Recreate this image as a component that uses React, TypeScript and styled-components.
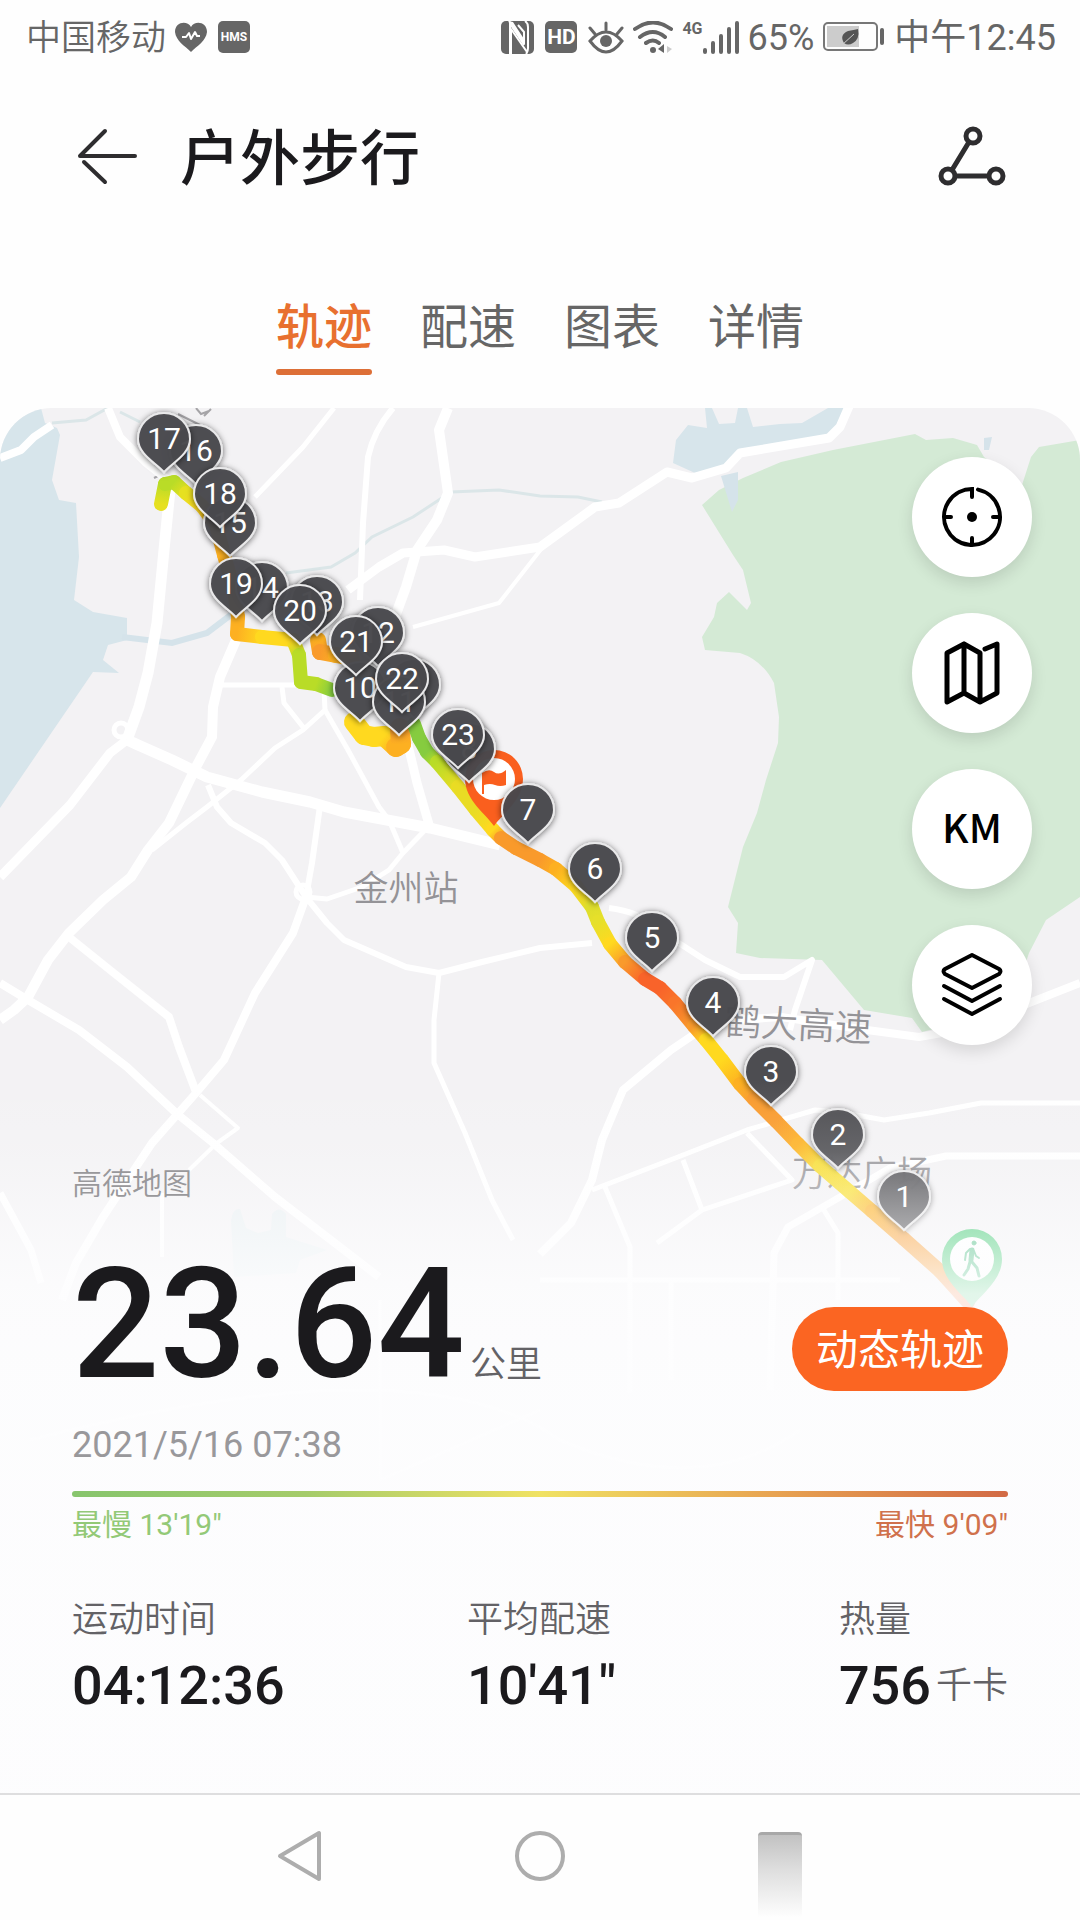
import React from "react";
import styled, { createGlobalStyle, css } from "styled-components";

const FONT = `Roboto, "Noto Sans CJK SC", sans-serif`;

const GlobalStyle = createGlobalStyle`
  *, *::before, *::after { box-sizing: border-box; }
  body { margin: 0; background: #fefefe; font-family: ${FONT}; color: #1b1a1d; }
  button { border: 0; padding: 0; background: none; font: inherit; color: inherit; cursor: pointer; }
  svg { display: block; flex: none; }
`;

const Page = styled.div`
  display: flex;
  flex-direction: column;
  min-height: 100vh;
`;

/* ---------- status bar ---------- */

const StatusBar = styled.div`
  display: flex;
  align-items: center;
  justify-content: space-between;
  height: 74px;
  padding: 0 24px 0 26px;
  color: #666;
  font-size: 36px;
  line-height: 48px;
  white-space: nowrap;
`;

const StatusGroup = styled.div`
  display: flex;
  align-items: center;
  gap: 9px;
`;

const Carrier = styled.span`
  padding-top: 4px;
  font-size: 35px;
  font-weight: 350;
`;

const Reading = styled.span`
  padding-top: 2px;
`;

const Badge = styled.span<{ $size: number }>`
  display: flex;
  align-items: center;
  justify-content: center;
  width: 32px;
  height: 32px;
  margin: 0 2px;
  border-radius: 5px;
  background: #666;
  color: #fff;
  font-size: ${(p) => p.$size}px;
  font-weight: 700;
  line-height: 20px;
`;

const Signal = styled.div`
  display: flex;
  align-items: flex-start;
`;

const Network = styled.span`
  font-size: 16px;
  font-weight: 700;
  line-height: 16px;
`;

/* ---------- header and tabs ---------- */

const Header = styled.header`
  display: flex;
  align-items: center;
  height: 166px;
  padding: 0 72px 0 76px;
`;

const Title = styled.h1`
  flex: 1;
  margin: 0 0 0 40px;
  padding-top: 6px;
  font-size: 60px;
  font-weight: 500;
  line-height: 80px;
`;

const Tabs = styled.nav`
  display: flex;
  justify-content: center;
  gap: 48px;
  padding: 60px 0 33px;
`;

const Tab = styled.button<{ $active?: boolean }>`
  position: relative;
  padding-bottom: 19px;
  color: #666;
  font-size: 48px;
  line-height: 56px;
  ${(p) =>
    p.$active &&
    css`
      color: #e8702f;
      font-weight: 500;
      &::after {
        content: "";
        position: absolute;
        left: 0;
        right: 0;
        bottom: 0;
        height: 6px;
        border-radius: 3px;
        background: #dd6f37;
      }
    `}
`;

/* ---------- map card ---------- */

const MapCard = styled.main`
  position: relative;
  display: flex;
  flex: 1;
  flex-direction: column;
  overflow: hidden;
  border-radius: 52px 52px 0 0;
  background: #fdfdfe;
`;

const MapArt = styled.svg`
  position: absolute;
  inset: 0;
  width: 100%;
  height: 100%;
`;

const PlaceName = styled.text<{ $size: number }>`
  font-family: ${FONT};
  font-size: ${(p) => p.$size}px;
  font-weight: 350;
  text-anchor: middle;
  fill: #949397;
`;

const PinNumber = styled.text`
  font-family: ${FONT};
  font-size: 30px;
  text-anchor: middle;
  fill: #fff;
`;

const Tools = styled.div`
  position: relative;
  display: flex;
  flex-direction: column;
  align-self: flex-end;
  gap: 36px;
  padding: 49px 48px 0 0;
`;

const ToolButton = styled.button`
  display: flex;
  align-items: center;
  justify-content: center;
  width: 120px;
  height: 120px;
  border-radius: 50%;
  background: #fff;
  box-shadow: 0 6px 16px rgba(0, 0, 0, 0.12);
  color: #000;
`;

const UnitLabel = styled.span`
  padding-bottom: 6px;
  font-family: "Noto Sans CJK SC", sans-serif;
  font-size: 40px;
  font-weight: 500;
  line-height: 48px;
`;

const Summary = styled.section`
  position: relative;
  display: flex;
  flex-direction: column;
  padding: 119px 72px 74px;
`;

const Attribution = styled.span`
  color: #99989b;
  font-size: 30px;
  font-weight: 350;
  line-height: 40px;
`;

const DistanceRow = styled.div`
  display: flex;
  align-items: flex-end;
  justify-content: space-between;
  margin-top: 41px;
`;

const Distance = styled.div`
  font-size: 154px;
  font-weight: 500;
  line-height: 160px;
`;

const Unit = styled.span`
  margin-left: 5px;
  color: #636266;
  font-size: 36px;
  font-weight: 350;
  line-height: 40px;
`;

const ReplayButton = styled.button`
  height: 84px;
  margin-bottom: 14px;
  padding: 4px 24px 0;
  border-radius: 42px;
  background: #fb6522;
  color: #fff;
  font-size: 42px;
  line-height: 56px;
`;

const Time = styled.time`
  margin-top: 16px;
  color: #99989b;
  font-size: 36px;
  line-height: 48px;
`;

const PaceBar = styled.div`
  height: 6px;
  margin-top: 22px;
  border-radius: 3px;
  background: linear-gradient(90deg, #87c56d, #a5cc6a 25%, #f0e263 50%, #e8a351 75%, #d26a45);
`;

const PaceEnds = styled.div`
  display: flex;
  justify-content: space-between;
  margin-top: 8px;
  font-size: 30px;
  line-height: 40px;
`;

const PaceEnd = styled.span<{ $color: string }>`
  color: ${(p) => p.$color};
`;

const Stats = styled.dl`
  display: grid;
  grid-template-columns: 394fr 371fr auto;
  margin: 51px 0 0;
`;

const Stat = styled.div`
  display: flex;
  flex-direction: column;
  gap: 10px;
`;

const StatName = styled.dt`
  color: #636266;
  font-size: 36px;
  font-weight: 350;
  line-height: 48px;
`;

const StatValue = styled.dd`
  display: flex;
  align-items: center;
  margin: 0;
  font-size: 54px;
  font-weight: 500;
  line-height: 64px;
  white-space: nowrap;
`;

/* ---------- system navigation ---------- */

const SystemNav = styled.nav`
  display: flex;
  justify-content: center;
  height: 127px;
  border-top: 2px solid #dededf;
  background: #fefefe;
`;

const NavButton = styled.button`
  display: flex;
  justify-content: center;
  width: 240px;
  padding-top: 35px;
`;

const RecentShade = styled.span`
  width: 44px;
  height: 90px;
  margin-top: 2px;
  border-top: 3px solid #a8a8a8;
  border-radius: 4px 4px 0 0;
  background: linear-gradient(#c2c2c2, #dedede 40%, #fefefe 95%);
`;

/* ---------- map data ---------- */

const roads: [number, string][] = [
  [8, "M108 408L120 437L145 462L168 480"],
  [11, "M170 490L164 550L157 623L148 673L139 707L127 740"],
  [9, "M127 740L110 753L70 805L0 877"],
  [11, "M127 740Q138 745 172 760L207 777L262 792L310 802L344 812L430 828L500 845"],
  [10, "M236 640L220 677L213 707L212 737L196 767L169 823L148 850L131 877L103 900L69 933L48 960L28 997L14 1010L0 1020"],
  [5, "M222 685H326"],
  [5, "M282 687L284 703L303 727M324 690L325 710L303 730L275 748L241 780L207 807L186 823L152 850"],
  [5, "M325 710L348 750L379 807L389 820L403 853"],
  [9, "M408 745L417 783L430 828"],
  [5, "M427 828L403 853L389 870L362 887L327 899L306 897"],
  [6, "M208 785L217 807L231 823L265 843L282 860L306 897L327 923L344 940L406 967L439 973L482 962L540 948L592 943"],
  [6, "M320 806L312 863L306 897"],
  [5, "M439 973L434 1020V1063L465 1133L492 1200L513 1240"],
  [8, "M306 897L293 933L255 993L224 1060L196 1093L152 1143L103 1217L76 1263L62 1300"],
  [8, "M69 937L110 970L169 1017L179 1047L196 1092"],
  [8, "M0 983L28 1000L79 1030L127 1067L176 1113L213 1143L275 1197L379 1277"],
  [4, "M200 1095L238 1128L217 1143L189 1170"],
  [7, "M0 1193L31 1250L41 1283"],
  [4, "M162 1193V1257"],
  [5, "M334 408L303 447L255 497"],
  [6, "M393 408Q374 430 368 457L363 523L360 600"],
  [10, "M448 408L439 430L448 493L437 520L417 550L406 587L392 625"],
  [9, "M348 590L379 567L403 553L444 550L475 557L540 547L595 507L619 503L667 472L692 478L726 468L740 453L829 438L840 427L850 404"],
  [4, "M413 627L499 603L542 548"],
  [8, "M0 458L21 450L34 437L52 425"],
  [8, "M1080 983L1029 1003L970 1028L919 1037L867 1030L781 1017L736 1020L705 1027L671 1050L623 1090L602 1140L592 1180L571 1223L540 1254"],
  [6, "M609 908Q640 912 650 925L685 947L705 960L740 977H784L812 960L795 1010L790 1030"],
  [5, "M1080 1103H981L929 1113L884 1120L840 1112L815 1110L747 1130L678 1157L592 1190"],
  [7, "M1080 1156H946L890 1168L840 1197L788 1227L774 1253L770 1390"],
  [5, "M747 1133L792 1180L702 1210L657 1243M683 1160L702 1210M605 1187L630 1247V1393"],
  [5, "M822 1207L838 1233V1300M540 1280H900M671 1280V1380"],
  [3, "M30 1440Q420 1340 560 1440Q700 1500 800 1430M380 1300V1480M380 1480L540 1410"],
];

const C = {
  green: "#86cc3f",
  lime: "#b9dc27",
  yellow: "#ffd91f",
  amber: "#fdb021",
  orange: "#f99a2b",
  red: "#f9632a",
};

type TrackPoint = [number, number, string];

const tracks: { width: number; points: TrackPoint[] }[] = [
  {
    width: 14,
    points: [
      [161, 504, "#e6e020"],
      [165, 484, C.lime],
      [174, 482, C.lime],
      [186, 493, "#e6e020"],
      [202, 506, C.yellow],
      [216, 525, C.amber],
      [224, 555, C.amber],
      [234, 590, C.amber],
      [238, 617, C.amber],
      [237, 634, C.amber],
      [262, 637, C.yellow],
      [293, 640, C.yellow],
      [299, 655, C.lime],
      [301, 682, C.lime],
      [316, 684, C.lime],
      [332, 690, C.green],
    ],
  },
  {
    width: 16,
    points: [
      [318, 640, C.amber],
      [320, 652, C.orange],
      [336, 655, C.amber],
      [352, 658, C.amber],
    ],
  },
  {
    width: 20,
    points: [
      [354, 722, C.yellow],
      [364, 735, C.yellow],
      [374, 737, C.yellow],
      [384, 736, C.yellow],
      [396, 747, C.amber],
      [401, 744, C.amber],
      [400, 728, C.orange],
    ],
  },
  {
    width: 14,
    points: [
      [414, 724, C.green],
      [419, 738, C.green],
      [427, 752, C.green],
      [437, 762, C.lime],
      [458, 787, "#e9dc24"],
      [476, 810, "#e9dc24"],
      [493, 830, C.yellow],
      [501, 838, C.orange],
      [516, 848, C.orange],
      [540, 860, C.orange],
      [556, 869, C.amber],
      [576, 886, C.yellow],
      [592, 907, "#dede2c"],
      [598, 922, "#e6e02a"],
      [610, 944, C.yellow],
      [625, 962, C.orange],
      [645, 979, C.red],
      [660, 988, C.red],
      [675, 1003, "#f9752a"],
      [694, 1026, C.orange],
      [706, 1040, C.yellow],
      [722, 1060, C.yellow],
      [740, 1084, C.amber],
      [754, 1099, C.orange],
      [776, 1121, C.orange],
      [798, 1144, C.amber],
      [820, 1166, "#f7dc2c"],
      [850, 1192, "#f9e030"],
      [872, 1211, C.amber],
      [904, 1239, C.orange],
      [940, 1271, C.orange],
      [968, 1302, C.red],
    ],
  },
];

const pins: [number, number, number][] = [
  [1, 904, 1231],
  [2, 838, 1169],
  [3, 771, 1106],
  [4, 713, 1037],
  [5, 652, 972],
  [6, 595, 903],
  [7, 528, 844],
  [8, 469, 783],
  [9, 414, 719],
  [10, 360, 722],
  [11, 399, 736],
  [12, 378, 667],
  [13, 317, 636],
  [14, 262, 622],
  [15, 230, 557],
  [16, 196, 485],
  [17, 164, 473],
  [18, 220, 528],
  [19, 236, 618],
  [20, 300, 645],
  [21, 356, 676],
  [22, 402, 713],
  [23, 458, 769],
];

const Track = ({ points, width, id }: { points: TrackPoint[]; width: number; id: number }) => (
  <g strokeWidth={width} strokeLinecap="round">
    {points.slice(1).map(([x, y, c], i) => {
      const [px, py, pc] = points[i];
      const gid = `track-${id}-${i}`;
      return (
        <React.Fragment key={gid}>
          <linearGradient id={gid} gradientUnits="userSpaceOnUse" x1={px} y1={py} x2={x} y2={y}>
            <stop offset="0" stopColor={pc} />
            <stop offset="1" stopColor={c} />
          </linearGradient>
          <line x1={px} y1={py} x2={x} y2={y} stroke={`url(#${gid})`} />
        </React.Fragment>
      );
    })}
  </g>
);

const Pin = ({ n, x, y }: { n: number; x: number; y: number }) => (
  <g transform={`translate(${x} ${y})`}>
    <path
      d="M0 -1C-8 -10 -26 -19 -26 -34A26 26 0 0 1 26 -34C26 -19 8 -10 0 -1Z"
      fill="#49484c"
      fillOpacity="0.94"
      stroke="#e9e9ea"
      strokeWidth="2"
      filter="url(#pin-shadow)"
    />
    <PinNumber x="0" y="-24">{n}</PinNumber>
  </g>
);

const RouteMap = () => (
  <MapArt viewBox="0 408 1080 1385" preserveAspectRatio="xMidYMin slice" role="img" aria-label="轨迹地图">
    <defs>
      <filter id="pin-shadow" x="-30%" y="-30%" width="160%" height="160%">
        <feDropShadow dx="0" dy="1" stdDeviation="3" floodColor="#000" floodOpacity="0.6" />
      </filter>
      <linearGradient id="fade" x1="0" y1="0" x2="0" y2="1">
        <stop offset="0" stopColor="#fdfdfe" stopOpacity="0" />
        <stop offset="0.1" stopColor="#fdfdfe" stopOpacity="0.14" />
        <stop offset="0.2" stopColor="#fdfdfe" stopOpacity="0.5" />
        <stop offset="0.3" stopColor="#fdfdfe" stopOpacity="0.86" />
        <stop offset="0.45" stopColor="#fdfdfe" stopOpacity="0.95" />
        <stop offset="1" stopColor="#fdfdfe" stopOpacity="0.97" />
      </linearGradient>
    </defs>
    <rect y="408" width="1080" height="1385" fill="#f3f2f4" />
    <path
      fill="#d7e5eb"
      d="M0 408H41L45 423L57 428L60 435L52 480L59 500L76 503L79 557L74 600L93 612L127 618V640L108 645L103 660L119 673L93 672L0 808Z"
    />
    <path
      fill="#d7e5eb"
      d="M705 408L707 428L688 425L676 440L673 463L695 473L726 465L736 452L829 440L845 408H828L802 423L780 424L753 427L747 408H738L735 423L719 424L712 408Z"
    />
    <path
      fill="#e8eff1"
      d="M231 1220Q233 1208 240 1209L246 1228L258 1233L271 1230L272 1214Q279 1205 286 1214L286 1237L327 1250L300 1260L296 1273L234 1277Z"
    />
    <path
      fill="#d4ead5"
      d="M702 505L719 490L743 478L781 462L833 450L915 434L926 440L953 438L977 445L984 457L1022 485L1031 457L1039 447L1080 440V897L1046 920L1029 953L1010 1010L922 1032L912 1018L864 1010L822 960L760 958L736 953L738 923L728 907L743 847L757 813L766 780L778 743L779 717L774 683Q762 660 740 653L705 650L702 637L714 617L717 603L729 592L747 610L751 603L743 570L733 555Z"
    />
    <path fill="#d5e3ea" d="M984 438L992 437L989 450H984ZM721 476L738 472V500L732 512Z" />
    <path
      fill="none"
      stroke="#dbe6e8"
      strokeWidth="3"
      d="M286 573L331 567L355 553L372 537L413 517L451 492L499 490L540 496L578 497L602 502M52 423L86 420L108 408M120 412L140 422"
    />
    <path fill="none" stroke="#d5e3ea" strokeWidth="6" d="M122 637L172 643L207 633L232 614" />
    <path fill="none" stroke="#a5a4a7" strokeWidth="2" d="M178 414L200 425M196 408L201 414L209 411M204 416L211 409M154 478L162 474" />
    <g fill="none" stroke="#fff" strokeLinejoin="round">
      {roads.map(([w, d]) => (
        <path key={d} d={d} strokeWidth={w} />
      ))}
      <circle cx="121" cy="730" r="7" strokeWidth="5" />
      <circle cx="303" cy="892" r="7" strokeWidth="5" />
    </g>
    <PlaceName $size={35} x="406" y="901">金州站</PlaceName>
    <PlaceName $size={37} x="798" y="1038" transform="rotate(3 798 1025)">鹤大高速</PlaceName>
    <PlaceName $size={35} x="862" y="1186">万达广场</PlaceName>
    {tracks.map((track, i) => (
      <Track key={i} id={i} {...track} />
    ))}
    <g transform="translate(494 826)">
      <path d="M0 0C-8 -12 -29 -26 -29 -47A29 29 0 0 1 29 -47C29 -26 8 -12 0 0Z" fill="#fa5f1e" />
      <circle cy="-47" r="21" fill="#fff" />
      <path d="M-12 -53Q-5 -58 0 -54T12 -56V-41Q6 -39 1 -41T-10 -41V-32H-12Z" fill="#fa5f1e" />
    </g>
    <g transform="translate(972 1307)">
      <path d="M0 0C-8 -12 -30 -26 -30 -48A30 30 0 0 1 30 -48C30 -26 8 -12 0 0Z" fill="#3cc96f" />
      <circle cy="-48" r="22" fill="#fff" />
      <g fill="none" stroke="#3cb878" strokeLinecap="round" strokeLinejoin="round" transform="translate(0 -48)">
        <circle cx="2" cy="-16" r="2" fill="#3cb878" />
        <path strokeWidth="5" d="M0 -9L-1 1" />
        <path strokeWidth="2" d="M-2 -10L-6 -6L-7 1M2 -8L4 -3L7 -1" />
        <path strokeWidth="3" d="M-2 3L-4 10L-8 16M0 3L5 9L7 17" />
      </g>
    </g>
    {pins.map(([n, x, y]) => (
      <Pin key={n} n={n} x={x} y={y} />
    ))}
    <rect y="1080" width="1080" height="713" fill="url(#fade)" />
  </MapArt>
);

/* ---------- icons ---------- */

const HeartIcon = () => (
  <svg width="32" height="32" viewBox="0 0 32 32" aria-hidden="true">
    <path fill="#666" d="M16 31C10 25 1 20 0 11C0 1 12 -1 16 6C20 -1 32 1 32 11C31 20 22 25 16 31Z" />
    <path fill="none" stroke="#fff" strokeWidth="2" strokeLinejoin="round" d="M7 16H11L14 12L16 18L20 11L22 15H25" />
  </svg>
);

const NfcIcon = () => (
  <svg width="33" height="33" viewBox="0 0 33 33" aria-hidden="true">
    <rect width="33" height="33" rx="5" fill="#666" />
    <path
      fill="none"
      stroke="#fff"
      strokeWidth="2"
      strokeLinejoin="round"
      d="M8 0L23 23V11L17 4M10 33V8L26 31M25 33Q27 31 27 27V6Q27 2 24 0"
    />
    <path fill="#fff" d="M8 0L12 1L23 18V25L10 6V33H8Z" />
  </svg>
);

const EyeIcon = () => (
  <svg width="36" height="33" viewBox="0 0 36 33" fill="none" stroke="#666" strokeWidth="3" strokeLinecap="round" aria-hidden="true">
    <path d="M2 20Q18 2 34 20Q18 42 2 20ZM18 2V9M2 7L7 13M34 7L29 13" />
    <circle cx="18" cy="20" r="6" fill="#666" stroke="none" />
  </svg>
);

const WifiIcon = () => (
  <svg width="40" height="33" viewBox="0 0 40 33" fill="none" stroke="#666" strokeWidth="4" strokeLinecap="round" aria-hidden="true">
    <path d="M2 8Q20 -5 38 8M7 16Q20 6 32 16M13 22Q20 17 26 22" />
    <circle cx="20" cy="29" r="3" fill="#666" stroke="none" />
    <path fill="#666" stroke="none" d="M25 28L31 23V32Z" />
    <path fill="#ccc" stroke="none" d="M34 25L39 28L34 32Z" />
  </svg>
);

const BarsIcon = () => (
  <svg width="36" height="33" viewBox="0 0 36 33" fill="none" stroke="#666" strokeWidth="4" strokeLinecap="round" aria-hidden="true">
    <path d="M2 29V31M10 22V31M18 15V31M26 8V31M34 2V31" />
  </svg>
);

const BatteryIcon = () => (
  <svg width="62" height="30" viewBox="0 0 62 30" aria-hidden="true">
    <rect x="1" y="1" width="53" height="27" rx="4" fill="none" stroke="#777" strokeWidth="2" />
    <rect x="4" y="4" width="32" height="21" fill="#ccc" />
    <path fill="#555" d="M35 7Q37 17 30 21Q25 24 21 21Q16 13 25 9Q31 8 35 7Z" />
    <path stroke="#ccc" d="M19 23L31 12" />
    <rect x="57" y="6" width="4" height="17" rx="2" fill="#666" />
  </svg>
);

const BackIcon = () => (
  <svg width="64" height="60" viewBox="0 0 64 60" fill="none" stroke="#2e2d2f" strokeWidth="4" strokeLinecap="round" strokeLinejoin="round" aria-hidden="true">
    <path d="M59 29H4L29 4M8 35L29 55" />
  </svg>
);

const ShareIcon = () => (
  <svg width="72" height="64" viewBox="0 0 72 64" fill="none" stroke="#2e2d2f" strokeWidth="5" aria-hidden="true">
    <circle cx="37" cy="11" r="7" />
    <circle cx="12" cy="51" r="7" />
    <circle cx="60" cy="51" r="7" />
    <path d="M33 17L16 45M19 51H53" />
  </svg>
);

const LocateIcon = () => (
  <svg width="62" height="62" viewBox="-31 -31 62 62" fill="none" stroke="#000" strokeWidth="4" strokeLinecap="round" aria-hidden="true">
    <path d="M6 -27.35A28 28 0 1 1 0 -28V-20M-27 0H-21M21 0H27M0 21V27" />
    <circle r="5" fill="#000" stroke="none" />
  </svg>
);

const MapIcon = () => (
  <svg width="60" height="66" viewBox="0 0 60 66" fill="none" stroke="#000" strokeWidth="5" strokeLinecap="round" strokeLinejoin="round" aria-hidden="true">
    <path d="M22 4V53L5 62V13L22 4L38 13V62L22 53M38 62L55 53V4L43 9" />
  </svg>
);

const LayersIcon = () => (
  <svg width="64" height="66" viewBox="0 0 64 66" fill="none" stroke="#000" strokeWidth="4" strokeLinecap="round" strokeLinejoin="round" aria-hidden="true">
    <path d="M32 3L59 17Q62 19 59 22L32 36L5 22Q2 19 5 17ZM4 34L32 49L60 34M4 47L32 62L60 47" />
  </svg>
);

export default function App() {
  return (
    <>
      <GlobalStyle />
      <Page>
        <StatusBar>
          <StatusGroup>
            <Carrier>中国移动</Carrier>
            <HeartIcon />
            <Badge $size={12}>HMS</Badge>
          </StatusGroup>
          <StatusGroup>
            <NfcIcon />
            <Badge $size={21}>HD</Badge>
            <EyeIcon />
            <WifiIcon />
            <Signal>
              <Network>4G</Network>
              <BarsIcon />
            </Signal>
            <Reading>65%</Reading>
            <BatteryIcon />
            <Reading>中午12:45</Reading>
          </StatusGroup>
        </StatusBar>

        <Header>
          <button aria-label="返回">
            <BackIcon />
          </button>
          <Title>户外步行</Title>
          <button aria-label="分享">
            <ShareIcon />
          </button>
        </Header>

        <Tabs>
          <Tab $active>轨迹</Tab>
          <Tab>配速</Tab>
          <Tab>图表</Tab>
          <Tab>详情</Tab>
        </Tabs>

        <MapCard>
          <RouteMap />
          <Tools>
            <ToolButton aria-label="定位">
              <LocateIcon />
            </ToolButton>
            <ToolButton aria-label="地图类型">
              <MapIcon />
            </ToolButton>
            <ToolButton>
              <UnitLabel>KM</UnitLabel>
            </ToolButton>
            <ToolButton aria-label="图层">
              <LayersIcon />
            </ToolButton>
          </Tools>

          <Summary>
            <Attribution>高德地图</Attribution>
            <DistanceRow>
              <Distance>
                23.64<Unit>公里</Unit>
              </Distance>
              <ReplayButton>动态轨迹</ReplayButton>
            </DistanceRow>
            <Time>2021/5/16 07:38</Time>
            <PaceBar />
            <PaceEnds>
              <PaceEnd $color="#93c977">最慢 13'19"</PaceEnd>
              <PaceEnd $color="#d0714c">最快 9'09"</PaceEnd>
            </PaceEnds>
            <Stats>
              <Stat>
                <StatName>运动时间</StatName>
                <StatValue>04:12:36</StatValue>
              </Stat>
              <Stat>
                <StatName>平均配速</StatName>
                <StatValue>10'41"</StatValue>
              </Stat>
              <Stat>
                <StatName>热量</StatName>
                <StatValue>
                  756<Unit>千卡</Unit>
                </StatValue>
              </Stat>
            </Stats>
          </Summary>
        </MapCard>

        <SystemNav>
          <NavButton aria-label="后退">
            <svg width="48" height="52" viewBox="0 0 48 52" fill="none" stroke="#adadad" strokeWidth="4" strokeLinejoin="round" aria-hidden="true">
              <path d="M43 3V49L4 26Z" />
            </svg>
          </NavButton>
          <NavButton aria-label="主屏幕">
            <svg width="52" height="52" viewBox="0 0 52 52" fill="none" stroke="#adadad" strokeWidth="4" aria-hidden="true">
              <circle cx="26" cy="26" r="23" />
            </svg>
          </NavButton>
          <NavButton aria-label="最近任务">
            <RecentShade />
          </NavButton>
        </SystemNav>
      </Page>
    </>
  );
}
